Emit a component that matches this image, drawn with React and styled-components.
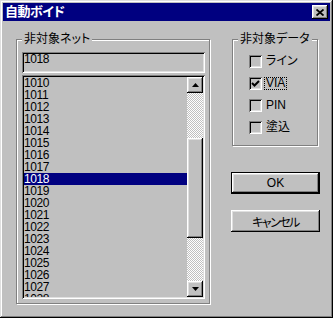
import styled, { createGlobalStyle } from "styled-components";

const GlobalStyle = createGlobalStyle`
  html, body {
    margin: 0;
    padding: 0;
    background: #c0c0c0;
  }
  body {
    font-family: "Liberation Sans", "Noto Sans CJK JP", sans-serif;
    font-size: 12px;
    color: #000;
    font-feature-settings: "palt";
  }
`;

const raised = `
  box-shadow: inset -1px -1px 0 #000, inset 1px 1px 0 #fff,
    inset -2px -2px 0 #808080, inset 2px 2px 0 #dfdfdf;
`;

const sunken = `
  box-shadow: inset 1px 1px 0 #808080, inset -1px -1px 0 #fff,
    inset 2px 2px 0 #000, inset -2px -2px 0 #dfdfdf;
`;

const Window = styled.div`
  width: 333px;
  height: 318px;
  box-sizing: border-box;
  padding: 3px;
  background: #c0c0c0;
  display: flex;
  flex-direction: column;
  box-shadow: inset -1px -1px 0 #000, inset 1px 1px 0 #dfdfdf,
    inset -2px -2px 0 #808080, inset 2px 2px 0 #fff;
`;

const TitleBar = styled.div`
  height: 18px;
  background: #000080;
  display: flex;
  align-items: center;
  justify-content: space-between;
  padding: 0 2px;
`;

const Title = styled.span`
  color: #fff;
  font-weight: bold;
  font-size: 13px;
  letter-spacing: -0.5px;
  line-height: 18px;
`;

const CloseButton = styled.div`
  width: 16px;
  height: 14px;
  background: #c0c0c0;
  display: flex;
  align-items: center;
  justify-content: center;
  ${raised}
`;

const Body = styled.div`
  display: flex;
  padding: 11px 0 0 13px;
`;

const GroupBox = styled.div`
  position: relative;
  width: ${(p) => p.$width}px;
  margin-left: ${(p) => p.$offset || 0}px;
`;

const Legend = styled.span`
  position: absolute;
  top: 0;
  left: 6px;
  padding: 0 2px;
  line-height: 14px;
  background: #c0c0c0;
`;

const Frame = styled.div`
  margin-top: 7px;
  height: ${(p) => p.$height}px;
  box-sizing: border-box;
  border: 1px solid #808080;
  box-shadow: inset 1px 1px 0 #fff, 1px 1px 0 #fff;
  padding: ${(p) => p.$padding};
  display: flex;
  flex-direction: column;
`;

const EditBox = styled.div`
  width: 183px;
  height: 21px;
  box-sizing: border-box;
  padding: 1px 2px 0 2px;
  line-height: 13px;
  letter-spacing: -0.4px;
  ${sunken}
`;

const ListBox = styled.div`
  width: 183px;
  height: 224px;
  margin-top: 2px;
  box-sizing: border-box;
  padding: 2px;
  display: flex;
  ${sunken}
`;

const Items = styled.div`
  flex: 1;
  overflow: hidden;
`;

const Item = styled.div`
  height: 12px;
  line-height: 12px;
  padding-left: 0;
  letter-spacing: -0.4px;
  background: ${(p) => (p.$selected ? "#000080" : "transparent")};
  color: ${(p) => (p.$selected ? "#fff" : "#000")};
`;

const ScrollBar = styled.div`
  width: 16px;
  display: flex;
  flex-direction: column;
`;

const ScrollButton = styled.div`
  width: 16px;
  height: 16px;
  background: #c0c0c0;
  display: flex;
  align-items: center;
  justify-content: center;
  ${raised}
`;

const Track = styled.div`
  flex: 1;
  display: flex;
  flex-direction: column;
  background: repeating-conic-gradient(#fff 0 25%, #c0c0c0 0 50%) 0 0 / 2px 2px;
`;

const TrackGap = styled.div`
  height: ${(p) => p.$height}px;
  flex: ${(p) => (p.$grow ? 1 : "none")};
`;

const Thumb = styled.div`
  height: 100px;
  background: #c0c0c0;
  ${raised}
`;

const RightColumn = styled.div`
  display: flex;
  flex-direction: column;
  width: 89px;
  margin-left: 21px;
`;

const CheckRow = styled.div`
  display: flex;
  align-items: center;
  height: 13px;
  gap: 2px;
  & + & {
    margin-top: 9px;
  }
`;

const CheckBox = styled.div`
  width: 13px;
  height: 13px;
  box-sizing: border-box;
  background: #c0c0c0;
  display: flex;
  align-items: center;
  justify-content: center;
  ${sunken}
`;

const CheckLabel = styled.span`
  padding: 0 1px;
  line-height: 11px;
  border: 1px ${(p) => (p.$focused ? "dotted #000" : "solid transparent")};
`;

const Button = styled.div`
  width: 89px;
  height: 22px;
  box-sizing: border-box;
  margin-top: ${(p) => p.$top}px;
  display: flex;
  align-items: center;
  justify-content: center;
  background: #c0c0c0;
  letter-spacing: ${(p) => p.$spacing || 0}px;
  border: 1px solid ${(p) => (p.$default ? "#000" : "transparent")};
  ${raised}
  ${(p) =>
    !p.$default &&
    `border: none;
     box-shadow: inset -1px -1px 0 #000, inset 1px 1px 0 #fff,
       inset -2px -2px 0 #808080, inset 2px 2px 0 #dfdfdf;`}
`;

const UpArrow = () => (
  <svg width="7" height="4" viewBox="0 0 7 4">
    <polygon points="3.5,0 7,4 0,4" fill="#000" />
  </svg>
);

const DownArrow = () => (
  <svg width="7" height="4" viewBox="0 0 7 4">
    <polygon points="0,0 7,0 3.5,4" fill="#000" />
  </svg>
);

const items = Array.from({ length: 19 }, (_, i) => String(1010 + i));
const checks = [
  { label: "ライン", checked: false },
  { label: "VIA", checked: true, focused: true },
  { label: "PIN", checked: false },
  { label: "塗込", checked: false },
];

export default function App() {
  return (
    <>
      <GlobalStyle />
      <Window>
        <TitleBar>
          <Title>自動ボイド</Title>
          <CloseButton>
            <svg width="8" height="7" viewBox="0 0 8 7">
              <path d="M0.5 0.5 L7.5 6.5 M7.5 0.5 L0.5 6.5" stroke="#000" strokeWidth="1.8" />
            </svg>
          </CloseButton>
        </TitleBar>
        <Body>
          <GroupBox $width={194}>
            <Frame $height={265} $padding="12px 0 0 5px">
              <EditBox>1018</EditBox>
              <ListBox>
                <Items>
                  {items.map((n) => (
                    <Item key={n} $selected={n === "1018"}>
                      {n}
                    </Item>
                  ))}
                </Items>
                <ScrollBar>
                  <ScrollButton>
                    <UpArrow />
                  </ScrollButton>
                  <Track>
                    <TrackGap $height={45} />
                    <Thumb />
                    <TrackGap $grow />
                  </Track>
                  <ScrollButton>
                    <DownArrow />
                  </ScrollButton>
                </ScrollBar>
              </ListBox>
            </Frame>
            <Legend>非対象ネット</Legend>
          </GroupBox>
          <RightColumn>
            <GroupBox $width={86} $offset={1}>
              <Frame $height={107} $padding="15px 0 0 16px">
                {checks.map((c) => (
                  <CheckRow key={c.label}>
                    <CheckBox>
                      {c.checked && (
                        <svg width="9" height="9" viewBox="0 0 9 9">
                          <polyline points="1,4 3.5,6.5 8,2" fill="none" stroke="#000" strokeWidth="2" />
                        </svg>
                      )}
                    </CheckBox>
                    <CheckLabel $focused={c.focused}>{c.label}</CheckLabel>
                  </CheckRow>
                ))}
              </Frame>
              <Legend>非対象データ</Legend>
            </GroupBox>
            <Button $default $top={26}>
              OK
            </Button>
            <Button $top={16} $spacing={-1.5}>
              キャンセル
            </Button>
          </RightColumn>
        </Body>
      </Window>
    </>
  );
}
